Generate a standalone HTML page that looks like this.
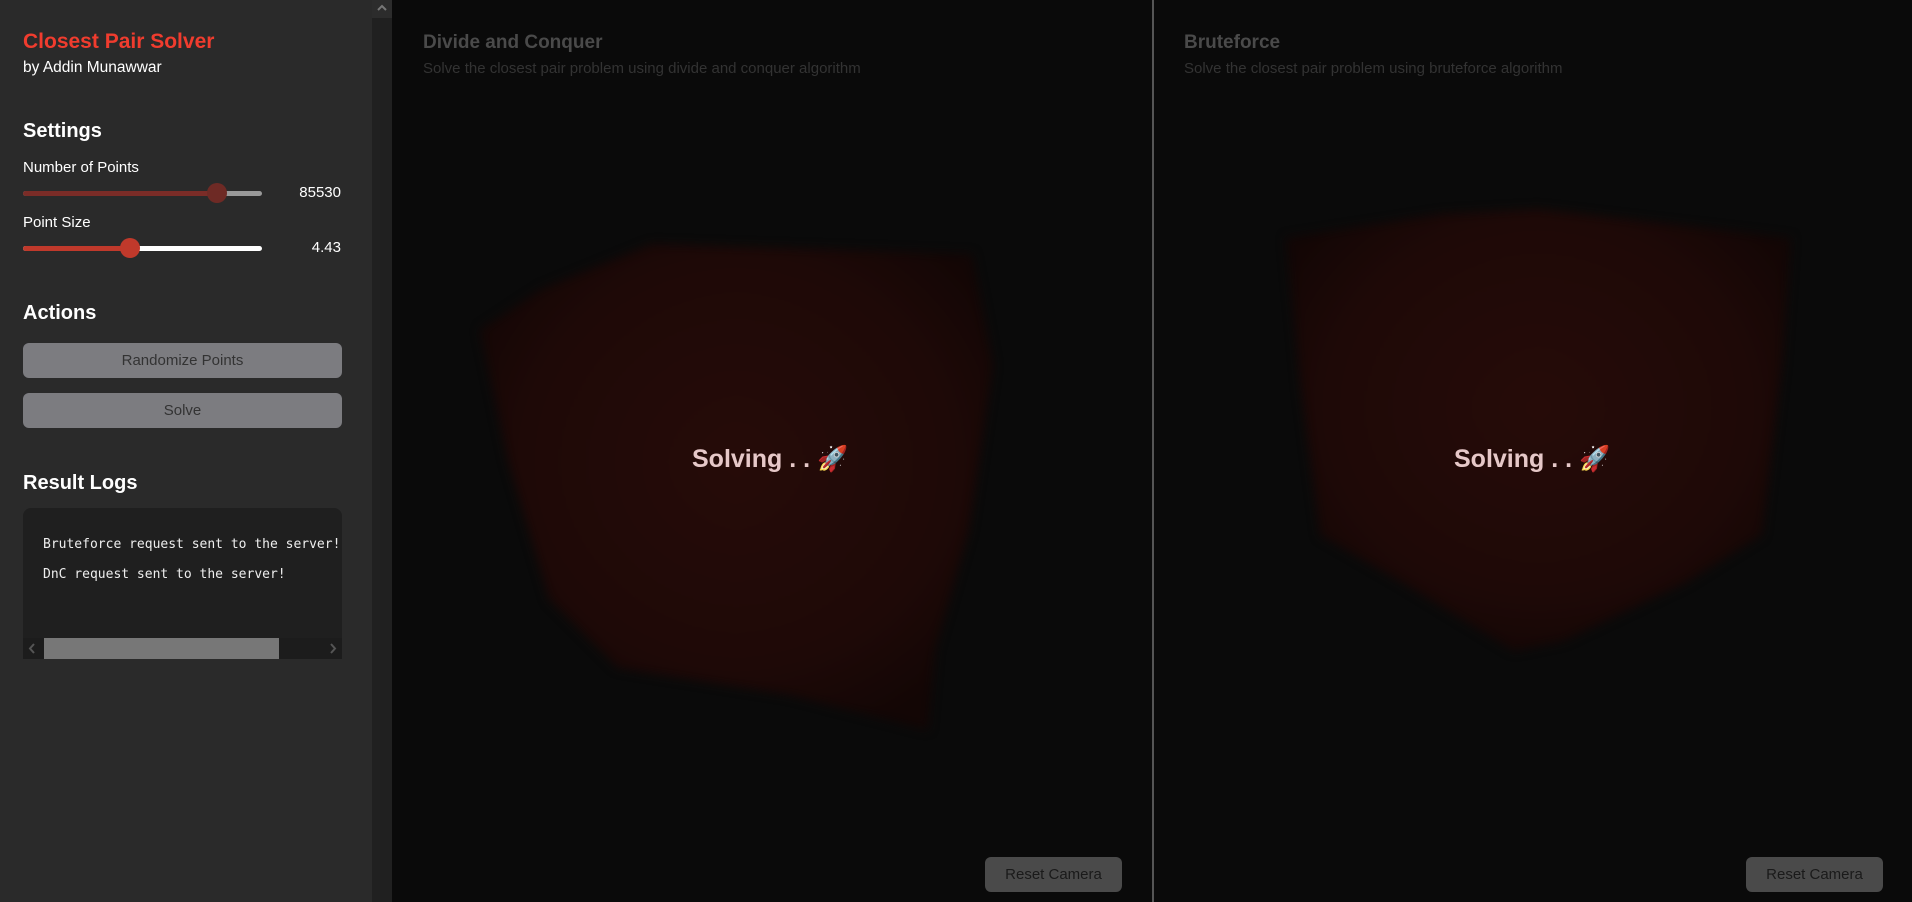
<!DOCTYPE html>
<html><head><meta charset="utf-8"><style>
*{margin:0;padding:0;box-sizing:border-box}
body{width:1912px;height:902px;overflow:hidden;background:#0a0a0a;font-family:"Liberation Sans",sans-serif;position:relative}
.abs{position:absolute}
#side{left:0;top:0;width:372px;height:902px;background:#2a2a2a}
#sb{left:372px;top:0;width:20px;height:902px;background:#202020}
h2{position:absolute;left:23px;color:#fff;font-size:20px;font-weight:bold}
.lbl{position:absolute;left:23px;color:#fff;font-size:15px}
.track{position:absolute;left:23px;width:239px;height:5px;border-radius:3px}
.thumb{position:absolute;width:20px;height:20px;border-radius:50%}
.val{position:absolute;left:241px;width:100px;text-align:right;color:#fff;font-size:15px}
.btn{position:absolute;left:23px;width:319px;height:35px;background:#7c7c80;border-radius:6px;color:#333;font-size:15px;text-align:center;line-height:35px}
.title{position:absolute;color:#4a4a4a;font-size:19px;font-weight:bold}
.sub{position:absolute;color:#333;font-size:15px}
.cloud{position:absolute;left:0;top:0;width:1912px;height:902px;filter:blur(5px)}
.solv{position:absolute;color:#e6c8c8;font-size:25px;font-weight:bold;white-space:nowrap}
.rc{position:absolute;top:857px;width:137px;height:35px;background:#4a4a4a;border-radius:6px;color:#1a1a1a;font-size:15px;text-align:center;line-height:35px}
</style></head><body>
<div class="abs" id="side"></div>
<div class="abs" id="sb"><div style="position:absolute;left:0;top:0;width:20px;height:18px;background:#2c2c2c"></div><svg class="abs" style="left:5px;top:4px" width="10" height="8"><path d="M1 6 L5 2 L9 6" stroke="#777" stroke-width="2" fill="none"/></svg></div>
<div class="abs" style="left:23px;top:30px;color:#f03c2e;font-size:21px;font-weight:bold">Closest Pair Solver</div>
<div class="abs" style="left:23px;top:59px;color:#fff;font-size:15.5px">by Addin Munawwar</div>
<h2 style="top:120px">Settings</h2>
<div class="lbl" style="top:159px">Number of Points</div>
<div class="track" style="top:191px;background:#999"></div>
<div class="track" style="top:191px;width:194px;background:#7a2c27"></div>
<div class="thumb" style="left:207px;top:183px;background:#6e2a25"></div>
<div class="val" style="top:184px">85530</div>
<div class="lbl" style="top:214px">Point Size</div>
<div class="track" style="top:246px;background:#fff"></div>
<div class="track" style="top:246px;width:107px;background:#c0392b"></div>
<div class="thumb" style="left:120px;top:238px;background:#c0392b"></div>
<div class="val" style="top:239px">4.43</div>
<h2 style="top:302px">Actions</h2>
<div class="btn" style="top:343px">Randomize Points</div>
<div class="btn" style="top:393px">Solve</div>
<h2 style="top:472px">Result Logs</h2>
<div class="abs" style="left:23px;top:508px;width:319px;height:151px;background:#1f1f1f;border-radius:8px 8px 0 0;overflow:hidden">
<div style="position:absolute;left:20px;top:22px;color:#eee;font-family:'DejaVu Sans Mono','Liberation Mono',monospace;font-size:13px;white-space:nowrap;line-height:30px">Bruteforce request sent to the server!<br>DnC request sent to the server!</div>
<div style="position:absolute;left:0;top:130px;width:319px;height:21px;background:#1c1c1c"></div>
<div style="position:absolute;left:21px;top:130px;width:235px;height:21px;background:#777"></div>
<svg style="position:absolute;left:5px;top:135px" width="8" height="11"><path d="M6 1 L2 5.5 L6 10" stroke="#555" stroke-width="2" fill="none"/></svg>
<svg style="position:absolute;left:306px;top:135px" width="8" height="11"><path d="M2 1 L6 5.5 L2 10" stroke="#555" stroke-width="2" fill="none"/></svg>
</div>
<div class="abs" style="left:1152px;top:0;width:2px;height:902px;background:#555"></div>
<svg class="cloud" viewBox="0 0 1912 902">
<defs><radialGradient id="g1" cx="0.5" cy="0.45" r="0.6"><stop offset="0" stop-color="#260b08"/><stop offset="0.7" stop-color="#1e0907"/><stop offset="1" stop-color="#130605"/></radialGradient></defs>
<polygon fill="url(#g1)" points="480,330 542,289 652,244 972,254 993,365 969,530 935,650 928,730 790,695 618,668 549,599 508,461"/>
<polygon fill="url(#g1)" points="1286,238 1442,214 1539,209 1791,238 1782,364 1762,535 1685,583 1563,641 1514,651 1403,583 1320,535 1301,389"/>
</svg>
<div class="title" style="left:423px;top:32px">Divide and Conquer</div>
<div class="sub" style="left:423px;top:60px">Solve the closest pair problem using divide and conquer algorithm</div>
<div class="title" style="left:1184px;top:32px">Bruteforce</div>
<div class="sub" style="left:1184px;top:60px">Solve the closest pair problem using bruteforce algorithm</div>
<div class="solv" style="left:692px;top:445px">Solving . . 🚀</div>
<div class="solv" style="left:1454px;top:445px">Solving . . 🚀</div>
<div class="rc" style="left:985px">Reset Camera</div>
<div class="rc" style="left:1746px">Reset Camera</div>
</body></html>
